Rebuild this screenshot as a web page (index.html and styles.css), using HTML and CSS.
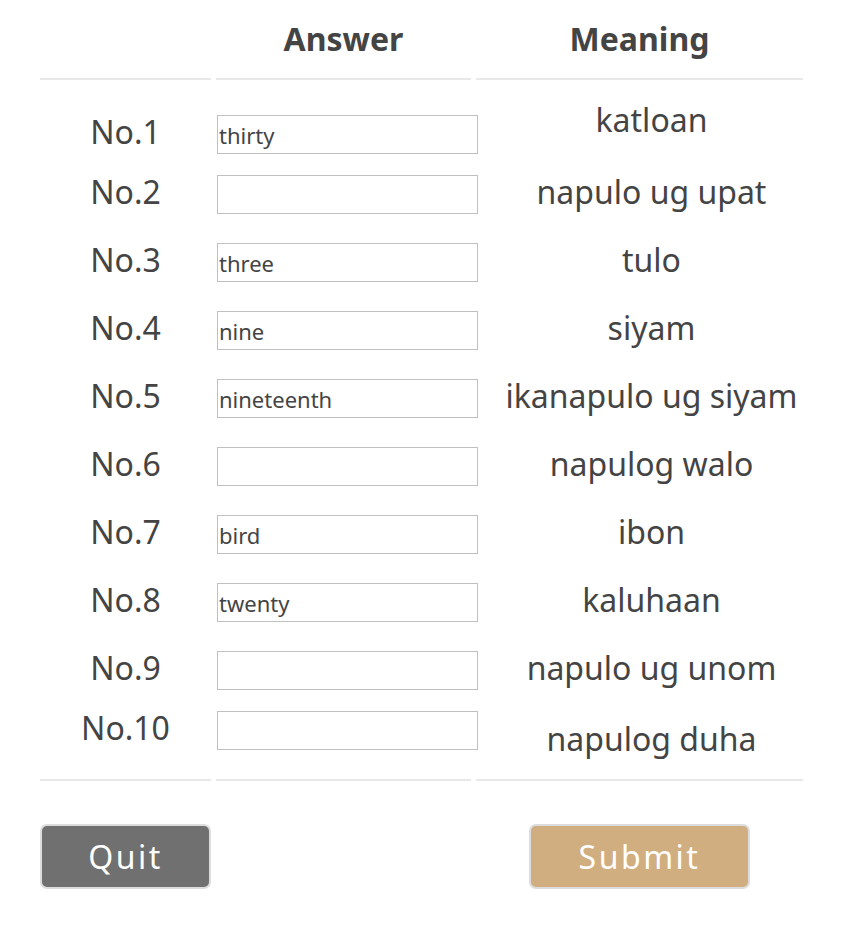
FILE: index.html
```html
<!DOCTYPE html>
<html lang="en">
<head>
<meta charset="utf-8">
<title>Quiz</title>
<link rel="stylesheet" href="styles.css">
</head>
<body>
<div class="sheet">
  <div class="row head">
    <div class="th"></div>
    <div class="th">Answer</div>
    <div class="th">Meaning</div>
  </div>
  <div class="body">
    <div class="row item first">
      <div class="label">No.1</div>
      <div class="cell"><input class="answer" type="text" value="thirty"></div>
      <div class="meaning up">katloan</div>
    </div>
    <div class="row item tight">
      <div class="label">No.2</div>
      <div class="cell"><input class="answer" type="text" value=""></div>
      <div class="meaning">napulo ug upat</div>
    </div>
    <div class="row item">
      <div class="label">No.3</div>
      <div class="cell"><input class="answer" type="text" value="three"></div>
      <div class="meaning">tulo</div>
    </div>
    <div class="row item">
      <div class="label">No.4</div>
      <div class="cell"><input class="answer" type="text" value="nine"></div>
      <div class="meaning">siyam</div>
    </div>
    <div class="row item">
      <div class="label">No.5</div>
      <div class="cell"><input class="answer" type="text" value="nineteenth"></div>
      <div class="meaning">ikanapulo ug siyam</div>
    </div>
    <div class="row item">
      <div class="label">No.6</div>
      <div class="cell"><input class="answer" type="text" value=""></div>
      <div class="meaning">napulog walo</div>
    </div>
    <div class="row item">
      <div class="label">No.7</div>
      <div class="cell"><input class="answer" type="text" value="bird"></div>
      <div class="meaning">ibon</div>
    </div>
    <div class="row item">
      <div class="label">No.8</div>
      <div class="cell"><input class="answer" type="text" value="twenty"></div>
      <div class="meaning">kaluhaan</div>
    </div>
    <div class="row item">
      <div class="label">No.9</div>
      <div class="cell"><input class="answer" type="text" value=""></div>
      <div class="meaning">napulo ug unom</div>
    </div>
    <div class="row item tight">
      <div class="label">No.10</div>
      <div class="cell"><input class="answer" type="text" value=""></div>
      <div class="meaning down">napulog duha</div>
    </div>
  </div>
  <div class="row foot">
    <div class="tf"></div>
    <div class="tf"></div>
    <div class="tf"></div>
  </div>
  <div class="row actions">
    <button class="btn quit" type="button">Quit</button>
    <div></div>
    <div class="submit-cell"><button class="btn submit" type="button">Submit</button></div>
  </div>
</div>
</body>
</html>
```

FILE: styles.css
```css
html, body {
  margin: 0;
  padding: 0;
  background: #ffffff;
}

body {
  font-family: "Noto Sans", "Liberation Sans", sans-serif;
  color: #444444;
}

.sheet {
  margin-left: 40px;
  width: 763px;
}

.row {
  display: grid;
  grid-template-columns: 171px 255px 327px;
  column-gap: 5px;
}

.th {
  padding: 19px 0 19px;
  font-size: 32px;
  line-height: 40px;
  font-weight: 700;
  text-align: center;
  border-bottom: 2px solid #e8e8e8;
}

.body {
  padding-top: 35px;
}

.item {
  height: 39px;
  align-items: baseline;
  margin-top: 29px;
}

.item.first {
  margin-top: 0;
}

.item.tight {
  margin-top: 21px;
}

.label {
  font-size: 32px;
  line-height: 32px;
  text-align: center;
}

.cell {
  display: flex;
  align-items: baseline;
}

.answer {
  box-sizing: border-box;
  width: 261px;
  height: 39px;
  margin: 0 0 0 1px;
  padding: 0 1px;
  border: 1px solid #c0c0c0;
  border-radius: 0;
  background: #ffffff;
  font-family: "Noto Sans", "Liberation Sans", sans-serif;
  font-size: 22px;
  color: #444444;
  outline: none;
}

.meaning {
  font-size: 32px;
  line-height: 32px;
  text-align: center;
  padding-left: 24px;
  white-space: nowrap;
}

.meaning.up {
  align-self: start;
  margin-top: -11px;
}

.meaning.down {
  align-self: start;
  margin-top: 12px;
}

.foot {
  margin-top: 29px;
}

.tf {
  border-top: 2px solid #e8e8e8;
}

.actions {
  margin-top: 43px;
}

.submit-cell {
  display: flex;
  justify-content: center;
}

.btn {
  box-sizing: border-box;
  height: 65px;
  border: 2px solid #dddddd;
  border-radius: 7px;
  padding: 0;
  font-family: "Noto Sans", "Liberation Sans", sans-serif;
  font-size: 32px;
  line-height: 40px;
  letter-spacing: 2.5px;
  color: #ffffff;
  cursor: pointer;
}

.quit {
  width: 171px;
  background: #707070;
}

.submit {
  width: 221px;
  background: #d1ae80;
}
```
